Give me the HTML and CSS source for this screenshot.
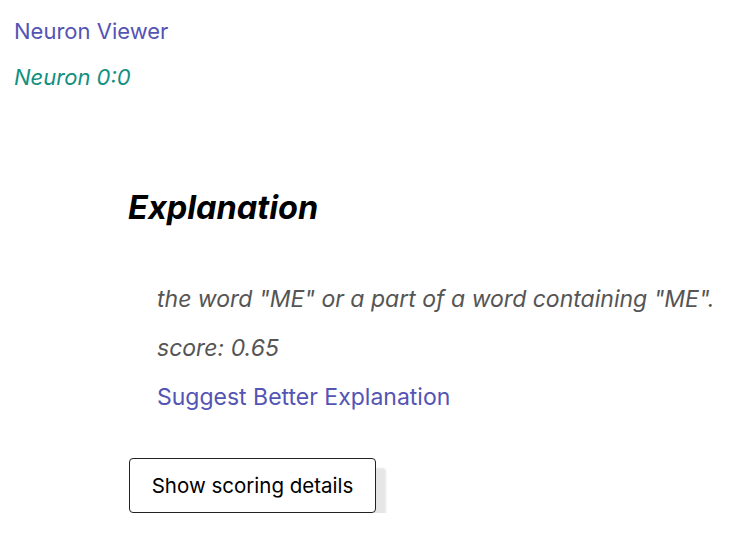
FILE: index.html
```html
<!DOCTYPE html>
<html>
<head>
<meta charset="utf-8">
<link rel="stylesheet" href="styles.css">
</head>
<body>
<div class="page">
  <a class="site-title" href="#">Neuron Viewer</a>
  <div class="neuron-id">Neuron 0:0</div>
  <section class="explanation">
    <h2 class="heading">Explanation</h2>
    <div class="body">
      <p class="text">the word "ME" or a part of a word containing "ME".</p>
      <p class="text">score: 0.65</p>
      <a class="suggest" href="#">Suggest Better Explanation</a>
    </div>
    <button class="details-btn">Show scoring details</button>
  </section>
</div>
</body>
</html>
```
FILE: styles.css
```css
html, body {
  margin: 0;
  padding: 0;
  background: #fff;
}
body {
  font-family: Inter, "Liberation Sans", sans-serif;
  overflow: hidden;
}
.page {
  padding: 17px 14px 0 14px;
  display: flex;
  flex-direction: column;
  align-items: flex-start;
}
.site-title {
  font-size: 22px;
  color: #5454b4;
  text-decoration: none;
  line-height: 28px;
}
.neuron-id {
  margin-top: 18px;
  font-size: 22px;
  font-style: italic;
  color: #12907f;
  line-height: 28px;
}
.explanation {
  margin-top: 97px;
  margin-left: 114px;
  display: flex;
  flex-direction: column;
  align-items: flex-start;
}
.heading {
  margin: 0;
  font-size: 32.5px;
  font-weight: 700;
  font-style: italic;
  color: #000;
  line-height: 40px;
}
.body {
  margin-top: 56px;
  margin-left: 29px;
  display: flex;
  flex-direction: column;
  align-items: flex-start;
}
.text {
  margin: 0 0 19px 0;
  font-size: 23px;
  font-style: italic;
  color: #555;
  line-height: 30px;
}
.suggest {
  font-size: 23px;
  color: #5454b4;
  text-decoration: none;
  line-height: 30px;
}
.details-btn {
  margin-top: 46px;
  margin-left: 1px;
  width: 247px;
  height: 55px;
  font-family: Inter, "Liberation Sans", sans-serif;
  font-size: 20.5px;
  color: #000;
  background: #fff;
  border: 1.5px solid #222;
  border-radius: 4px;
  box-shadow: 10px 10px 2px #e6e6e6;
}
```
